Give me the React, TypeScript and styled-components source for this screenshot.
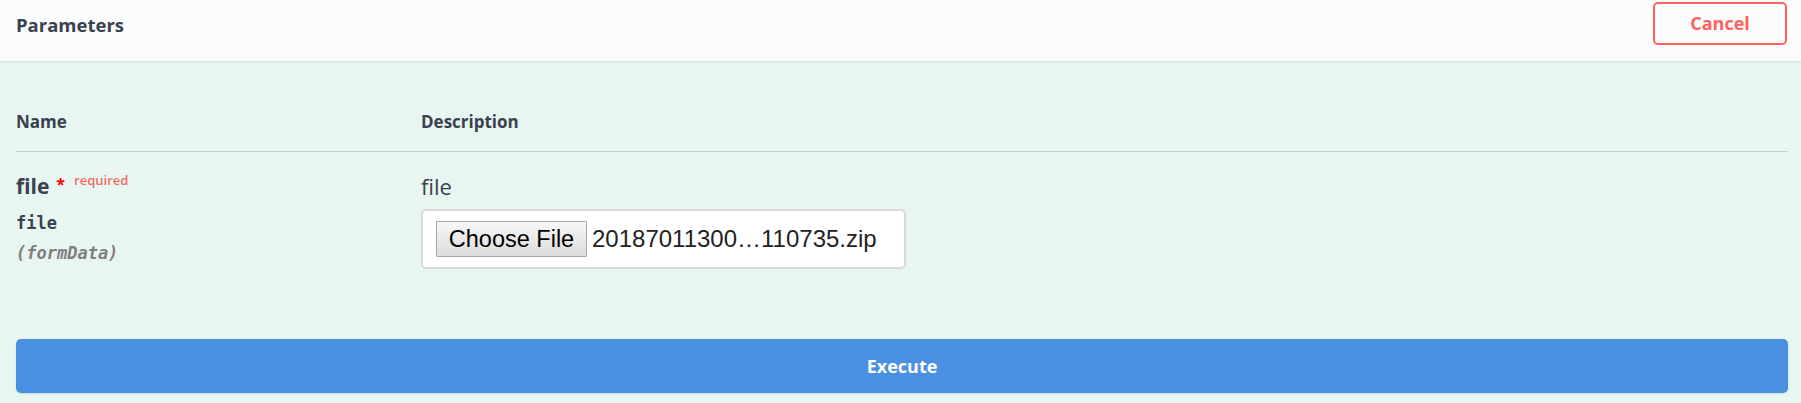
import React from "react";
import styled, { createGlobalStyle } from "styled-components";

const GlobalStyle = createGlobalStyle`
    html, body {
        margin: 0;
        padding: 0;
        background: #e7f6f0;
    }
    body {
        font-family: "Open Sans", "Noto Sans", sans-serif;
        color: #3b4151;
    }
    * {
        box-sizing: border-box;
    }
`;

const Section = styled.div`
    width: 100%;
    background: #e7f6f0;
`;

const SectionHeader = styled.div`
    height: 61px;
    display: flex;
    align-items: center;
    justify-content: space-between;
    padding: 1px 14px 16px 16px;
    background: rgba(255, 255, 255, 0.8);
    box-shadow: 0 1px 2px rgba(0, 0, 0, 0.1);
    position: relative;
`;

const Title = styled.h4`
    margin: 0;
    font-size: 18.5px;
    font-weight: 700;
    color: #3b4151;
    position: relative;
    top: 1px;
`;

const CancelButton = styled.button`
    width: 134px;
    height: 43px;
    border: 2px solid #ff6060;
    border-radius: 5px;
    background: transparent;
    color: #ff6060;
    font-family: "Open Sans", sans-serif;
    font-size: 18px;
    font-weight: 700;
    padding: 0;
    cursor: pointer;
`;

const Body = styled.div`
    padding: 0 13px 10px 16px;
`;

const Columns = styled.div`
    display: grid;
    grid-template-columns: 405px 1fr;
`;

const TableHead = styled(Columns)`
    height: 91px;
    align-items: end;
    padding-bottom: 19px;
    border-bottom: 1px solid rgba(59, 65, 81, 0.2);
`;

const HeadCell = styled.div`
    font-size: 17px;
    font-weight: 700;
    line-height: 20px;
    color: #3b4151;
`;

const Row = styled(Columns)`
    align-items: start;
    padding-top: 19px;
`;

const NameCell = styled.div`
    display: flex;
    flex-direction: column;
    padding-top: 3px;
`;

const ParamName = styled.div`
    display: flex;
    align-items: baseline;
    font-size: 21px;
    font-weight: 700;
    line-height: 25px;
    color: #3b4151;
`;

const Star = styled.span`
    color: red;
    font-size: 16px;
    margin-left: 7px;
    position: relative;
    top: -4px;
`;

const Required = styled.span`
    color: rgba(255, 0, 0, 0.6);
    font-size: 13px;
    font-weight: 600;
    margin-left: 9px;
    position: relative;
    top: -9px;
`;

const Mono = styled.div<{ $italic?: boolean }>`
    font-family: "DejaVu Sans Mono", "Liberation Mono", monospace;
    font-size: 17px;
    line-height: 30px;
    font-weight: ${p => (p.$italic ? 600 : 700)};
    font-style: ${p => (p.$italic ? "italic" : "normal")};
    color: ${p => (p.$italic ? "#808080" : "#3b4151")};
`;

const TypeLine = styled(Mono)`
    margin-top: 6px;
`;

const DescCell = styled.div`
    display: flex;
    flex-direction: column;
    align-items: flex-start;
`;

const DescText = styled.div`
    font-size: 22px;
    line-height: 26px;
    color: #3b4151;
    position: relative;
    top: 2px;
`;

const FileBox = styled.label`
    margin-top: 12px;
    width: 485px;
    height: 60px;
    display: flex;
    align-items: center;
    gap: 5px;
    padding: 0 13px;
    background: #fff;
    border: 2px solid #d9d9d9;
    border-radius: 5px;
    font-family: "Liberation Sans", Arial, sans-serif;
`;

const ChooseButton = styled.span`
    width: 151px;
    height: 36px;
    display: flex;
    align-items: center;
    justify-content: center;
    border: 1px solid #a6a6a6;
    border-radius: 1px;
    background: linear-gradient(#f7f7f7, #dcdcdc);
    color: #000;
    font-size: 23.5px;
`;

const FileName = styled.span`
    color: #222;
    font-size: 24px;
    white-space: nowrap;
`;

const ExecuteButton = styled.button`
    display: block;
    width: 100%;
    height: 54px;
    margin-top: 70px;
    border: none;
    border-radius: 5px;
    background: #4990e2;
    box-shadow: 0 1px 2px rgba(0, 0, 0, 0.1);
    color: #fff;
    font-family: "Open Sans", sans-serif;
    font-size: 18px;
    font-weight: 700;
    cursor: pointer;
`;

export default function App() {
    return (<>
        <GlobalStyle />
        <Section>
            <SectionHeader>
                <Title>Parameters</Title>
                <CancelButton>Cancel</CancelButton>
            </SectionHeader>
            <Body>
                <TableHead>
                    <HeadCell>Name</HeadCell>
                    <HeadCell>Description</HeadCell>
                </TableHead>
                <Row>
                    <NameCell>
                        <ParamName>
                            file<Star>*</Star><Required>required</Required>
                        </ParamName>
                        <TypeLine>file</TypeLine>
                        <Mono $italic>(formData)</Mono>
                    </NameCell>
                    <DescCell>
                        <DescText>file</DescText>
                        <FileBox>
                            <ChooseButton>Choose File</ChooseButton>
                            <FileName>20187011300…110735.zip</FileName>
                        </FileBox>
                    </DescCell>
                </Row>
                <ExecuteButton>Execute</ExecuteButton>
            </Body>
        </Section>
    </>);
}
